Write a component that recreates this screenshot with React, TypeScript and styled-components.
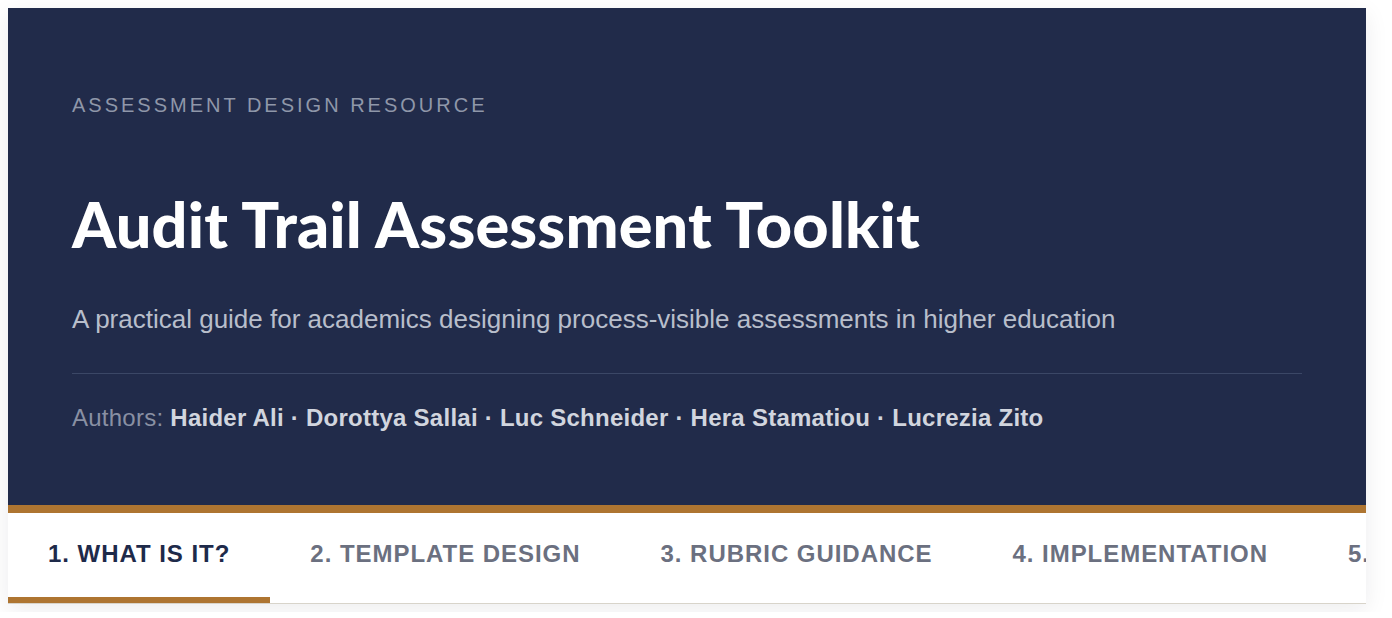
import React from "react";
import styled, { createGlobalStyle } from "styled-components";

const GlobalStyle = createGlobalStyle`
  html, body { margin: 0; padding: 0; background: #ffffff; }
  body { padding: 8px; font-family: "Liberation Sans", Arial, sans-serif; }
  * { box-sizing: border-box; }
`;

const Shell = styled.div`
  width: 1358px;
  background: #ffffff;
  box-shadow: 0 6px 22px rgba(20, 25, 40, 0.08);
`;

const Hero = styled.header`
  background: #212b4a;
  padding: 85px 64px 71px;
  display: flex;
  flex-direction: column;
`;

const Eyebrow = styled.div`
  font-size: 20px;
  line-height: 24px;
  letter-spacing: 3px;
  text-transform: uppercase;
  color: #8f97a9;
`;

const Title = styled.h1`
  margin: 74px 0 0;
  font-family: "Lato", "Liberation Sans", sans-serif;
  font-weight: 900;
  font-size: 63px;
  line-height: 66px;
  color: #ffffff;
  letter-spacing: 0.15px;
`;

const Subtitle = styled.p`
  margin: 46px 0 0;
  font-size: 26px;
  line-height: 32px;
  color: #b8becb;
`;

const Divider = styled.hr`
  margin: 38px 0 0;
  border: 0;
  height: 1px;
  background: #3b4766;
`;

const Authors = styled.p`
  margin: 28px 0 0;
  font-size: 24px;
  line-height: 32px;
  letter-spacing: 0.25px;
  color: #8990a3;
`;

const Name = styled.strong`
  font-weight: 700;
  color: #d1d5de;
`;

const TabBar = styled.nav`
  display: flex;
  flex-wrap: nowrap;
  overflow: hidden;
  border-top: 8px solid #ae7531;
  border-bottom: 1px solid #d8d4ca;
  background: #ffffff;
`;

const Tab = styled.button<{ $active?: boolean }>`
  flex: 0 0 auto;
  background: none;
  border: 0;
  border-bottom: 6px solid ${(p) => (p.$active ? "#ae7531" : "transparent")};
  padding: 27px 40px 29px;
  font-family: "Liberation Sans", Arial, sans-serif;
  font-weight: 700;
  font-size: 24px;
  line-height: 28px;
  letter-spacing: 0.96px;
  white-space: nowrap;
  text-transform: uppercase;
  color: ${(p) => (p.$active ? "#1e2a4a" : "#6b7080")};
  cursor: pointer;
`;

const authors = [
  "Haider Ali",
  "Dorottya Sallai",
  "Luc Schneider",
  "Hera Stamatiou",
  "Lucrezia Zito",
];

const tabs = [
  "1. What is it?",
  "2. Template Design",
  "3. Rubric Guidance",
  "4. Implementation",
  "5. Resources",
];

export default function App() {
  return (
    <>
      <GlobalStyle />
      <Shell>
        <Hero>
          <Eyebrow>Assessment Design Resource</Eyebrow>
          <Title>Audit Trail Assessment Toolkit</Title>
          <Subtitle>
            A practical guide for academics designing process-visible assessments in higher education
          </Subtitle>
          <Divider />
          <Authors>
            Authors: <Name>{authors.join(" · ")}</Name>
          </Authors>
        </Hero>
        <TabBar>
          {tabs.map((t, i) => (
            <Tab key={t} $active={i === 0}>
              {t}
            </Tab>
          ))}
        </TabBar>
      </Shell>
    </>
  );
}
